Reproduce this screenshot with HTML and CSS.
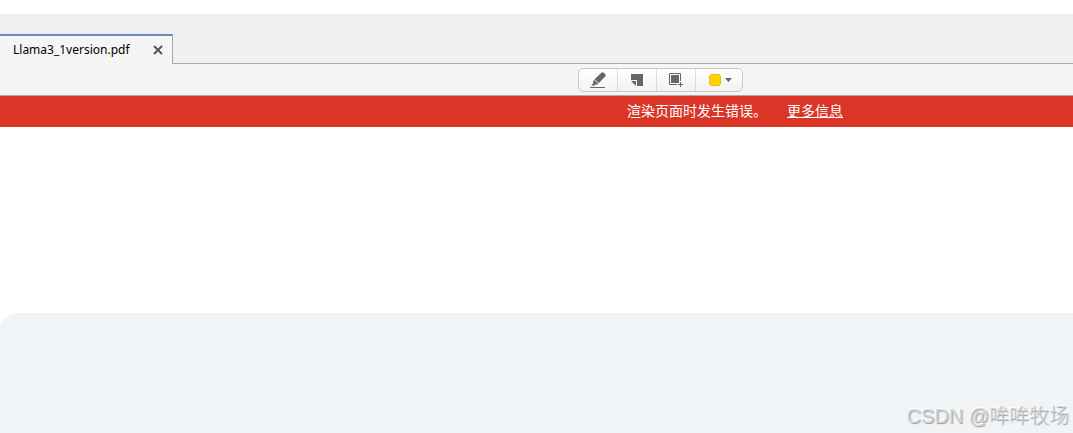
FILE: index.html
```html
<!DOCTYPE html>
<html lang="zh-CN">
<head>
<meta charset="utf-8">
<meta name="viewport" content="width=device-width, initial-scale=1">
<title>Llama3_1version.pdf</title>
<link rel="stylesheet" href="styles.css">
</head>
<body>
<header class="tab-bar">
  <div class="tab">
    <span class="tab-title">Llama3_1version.pdf</span>
    <button class="tab-close" type="button" aria-label="关闭">
      <svg width="10" height="10" viewBox="0 0 10 10"><path d="M1 1l8 8M9 1L1 9" fill="none" stroke="#555" stroke-width="2"/></svg>
    </button>
  </div>
</header>
<div class="toolbar">
  <div class="tool-group">
    <button class="tool" type="button" aria-label="高亮文本">
      <svg width="16" height="16" viewBox="0 0 16 16"><path d="M11 1q1.300-1.300 2.700-.2l1.500 1.200q1 1.300 0 2.500L8.700 11.300 4.600 7.300z" fill="#666"/><path d="M4.200 7.800l4 4-1.800.9-1.200-.2-1 1.200H1.200l2.100-2.400-.2-1.400z" fill="#666"/><path d="M0 15.500h15" stroke="#666"/></svg>
    </button>
    <button class="tool" type="button" aria-label="添加笔记">
      <svg width="12" height="12" viewBox="0 0 12 12"><path d="M0 0h12v12H6V6H0z" fill="#666"/><path d="M0 7h5v5z" fill="#666"/></svg>
    </button>
    <button class="tool" type="button" aria-label="选择区域">
      <svg width="14" height="14" viewBox="0 0 14 14"><path d="M8 11.500H.5V.5h11V8" fill="none" stroke="#666"/><path d="M2 2h8v8H2z" fill="#666"/><path d="M11.500 9v5M9 11.500h5" stroke="#666"/></svg>
    </button>
    <button class="tool tool-color" type="button" aria-label="选择颜色">
      <span class="swatch"></span>
      <svg width="7" height="4" viewBox="0 0 7 4"><path d="M0 0h7L3.500 4z" fill="#666"/></svg>
    </button>
  </div>
</div>
<div class="error-bar" role="alert">
  <span>渲染页面时发生错误。</span>
  <a class="more" href="#">更多信息</a>
</div>
<main class="viewer">
  <section class="panel">
    <span class="watermark">CSDN @哞哞牧场</span>
  </section>
</main>
</body>
</html>
```
FILE: styles.css
```css
* {
  box-sizing: border-box;
}

body {
  margin: 0;
  min-height: 100vh;
  padding-top: 14px;
  display: flex;
  flex-direction: column;
  overflow: hidden;
  background: #fff;
  font-family: "Noto Sans", "Noto Sans CJK SC", sans-serif;
}

button {
  margin: 0;
  padding: 0;
  border: 0;
  background: none;
}

svg {
  display: block;
}

.tab-bar {
  display: flex;
  padding-top: 20px;
  background: #f0f0f0;
  box-shadow: inset 0 -1px #a9a9a9;
}

.tab {
  display: flex;
  align-items: center;
  gap: 20px;
  height: 30px;
  padding: 0 6px 0 13px;
  border-top: 2px solid #6a8cc7;
  border-right: 1px solid #a9a9a9;
  background: #f5f5f5;
}

.tab-title {
  font-size: 12px;
  line-height: 28px;
  color: #000;
}

.tab-close {
  display: grid;
  place-items: center;
  width: 16px;
  height: 16px;
}

.toolbar {
  display: flex;
  padding: 4px 0 3px 578px;
  border-bottom: 1px solid #a9a9a9;
  background: #f5f5f5;
}

.tool-group {
  display: flex;
  height: 24px;
  border: 1px solid #c8c8c8;
  border-radius: 5px;
  background: linear-gradient(#fff, #f2f2f2);
}

.tool {
  display: flex;
  align-items: center;
  justify-content: center;
  width: 39px;
  border-right: 1px solid #dcdcdc;
}

.tool-color {
  gap: 4px;
  width: 46px;
  padding-left: 2px;
  border-right: 0;
}

.swatch {
  width: 12px;
  height: 12px;
  border: 1px solid #e6bf00;
  border-radius: 3px;
  background: #ffd400;
}

.error-bar {
  display: flex;
  gap: 20px;
  padding: 0 0 2px 627px;
  font-size: 14px;
  line-height: 29px;
  white-space: nowrap;
  color: #fff;
  background: #da3527;
  font-family: "Noto Sans CJK SC", sans-serif;
}

.more {
  color: #fff;
}

.viewer {
  flex: 1;
  display: flex;
  padding-top: 186px;
}

.panel {
  flex: 1;
  display: flex;
  align-items: flex-end;
  justify-content: flex-end;
  margin-left: -4px;
  padding: 0 4px 3px 0;
  border-top-left-radius: 24px;
  background: #f0f4f7;
}

.watermark {
  font-family: "Liberation Sans", "Noto Sans CJK SC", sans-serif;
  font-size: 20px;
  font-weight: 300;
  line-height: 28px;
  color: #d3d5d7;
  text-shadow: 1px 1px 1px #999b9d, -1px -1px #fff;
}
```
